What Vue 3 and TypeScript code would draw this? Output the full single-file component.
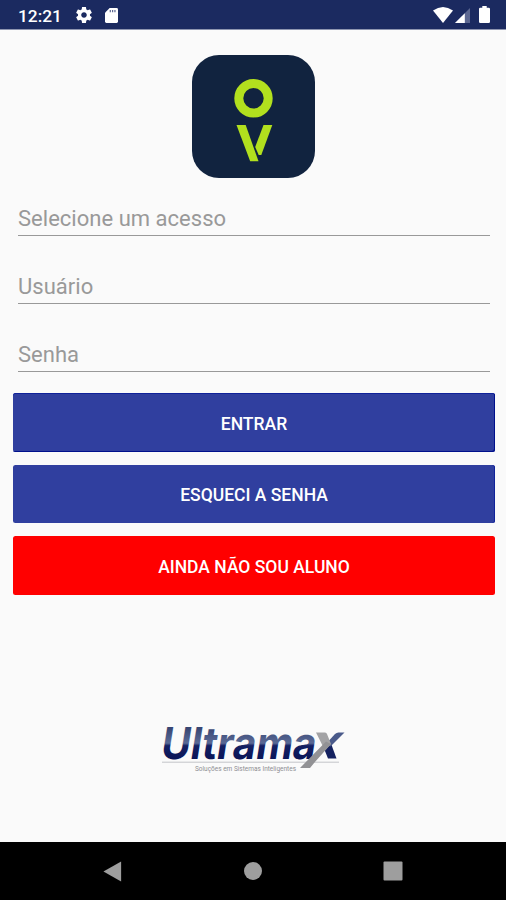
<script setup lang="ts">
import { reactive } from 'vue'

interface Field {
  key: 'access' | 'user' | 'password'
  label: string
  type: string
}

interface Action {
  label: string
  tone: 'first' | 'second' | 'danger'
}

const form = reactive({ access: '', user: '', password: '' })

const fields: Field[] = [
  { key: 'access', label: 'Selecione um acesso', type: 'text' },
  { key: 'user', label: 'Usuário', type: 'text' },
  { key: 'password', label: 'Senha', type: 'password' },
]

const actions: Action[] = [
  { label: 'ENTRAR', tone: 'first' },
  { label: 'ESQUECI A SENHA', tone: 'second' },
  { label: 'AINDA NÃO SOU ALUNO', tone: 'danger' },
]
</script>

<template>
  <div class="screen">
    <header class="status">
      <span class="clock">12:21</span>
      <svg class="gear" viewBox="2 2 20 20" aria-hidden="true">
        <path fill="#fff" d="M19.43 12.98c.04-.32.07-.64.07-.98s-.03-.66-.07-.98l2.11-1.65c.19-.15.24-.42.12-.64l-2-3.46c-.12-.22-.39-.3-.61-.22l-2.49 1c-.52-.4-1.08-.73-1.69-.98l-.38-2.65C14.46 2.18 14.25 2 14 2h-4c-.25 0-.46.18-.49.42l-.38 2.65c-.61.25-1.17.59-1.69.98l-2.49-1c-.23-.09-.49 0-.61.22l-2 3.46c-.13.22-.07.49.12.64l2.11 1.65c-.04.32-.07.65-.07.98s.03.66.07.98l-2.11 1.65c-.19.15-.24.42-.12.64l2 3.46c.12.22.39.3.61.22l2.49-1c.52.4 1.08.73 1.69.98l.38 2.65c.03.24.24.42.49.42h4c.25 0 .46-.18.49-.42l.38-2.65c.61-.25 1.17-.59 1.69-.98l2.49 1c.23.09.49 0 .61-.22l2-3.46c.12-.22.07-.49-.12-.64l-2.11-1.65zM12 15.5c-1.93 0-3.5-1.57-3.5-3.5s1.57-3.5 3.5-3.5 3.5 1.57 3.5 3.5-1.57 3.5-3.5 3.5z" />
      </svg>
      <svg class="card" viewBox="0 0 14 16" aria-hidden="true">
        <path fill="#fff" d="M5 0h7.500q1.500 0 1.500 1.500v13q0 1.500-1.500 1.500h-11q-1.500 0-1.500-1.500V5z" />
        <path stroke="#5c6791" stroke-width="1.300" d="M5.700 2v2.500M8.200 2v2.500M10.700 2v2.500" />
      </svg>
      <span class="grow"></span>
      <svg class="wifi" viewBox="0 0 20 16" aria-hidden="true">
        <path fill="#fff" d="M0 3.500Q10-3.500 20 3.500L10 16z" />
      </svg>
      <svg class="signal" viewBox="0 0 15 15" aria-hidden="true">
        <path fill="#5c6791" d="M15 0v15H0z" />
        <path fill="#fff" d="M9.800 5.200V15H0z" />
      </svg>
      <svg class="battery" viewBox="0 0 11 17" aria-hidden="true">
        <path fill="#fff" d="M3.300 0h4.400v1.800h2q1.300 0 1.300 1.300v12.600q0 1.300-1.300 1.300H1.300Q0 17 0 15.700V3.100q0-1.300 1.300-1.300h2z" />
      </svg>
    </header>

    <main class="content">
      <svg class="logo" viewBox="0 0 123 123" role="img" aria-label="OV">
        <rect width="123" height="123" rx="27" fill="#11233f" />
        <circle cx="61.500" cy="43.300" r="14.700" fill="none" stroke="#b2e01e" stroke-width="9" />
        <path fill="#b2e01e" d="M44.500 70h9.200l12.800 36.300h-8.300z" />
        <path fill="#b2e01e" d="M71.500 70h8.800L69.300 100h-2.600l-3.500-8z" />
      </svg>

      <form class="form" @submit.prevent>
        <div class="fields">
          <input
            v-for="field in fields"
            :key="field.key"
            v-model="form[field.key]"
            class="field"
            :type="field.type"
            :placeholder="field.label"
            :aria-label="field.label"
          />
        </div>
        <div class="actions">
          <button v-for="action in actions" :key="action.label" type="button" class="action" :class="action.tone">
            {{ action.label }}
          </button>
        </div>
      </form>

      <svg class="brand" viewBox="0 0 190 54" aria-label="Ultramax">
        <defs>
          <linearGradient id="ink" gradientUnits="userSpaceOnUse" x1="0" y1="-32" x2="0" y2="0">
            <stop offset="0" stop-color="#34426f" />
            <stop offset="0.520" stop-color="#5a6a96" />
            <stop offset="0.600" stop-color="#142062" />
            <stop offset="1" stop-color="#0b1659" />
          </linearGradient>
        </defs>
        <path stroke="#c3c4c9" stroke-width="1" d="M4 42.200h177" />
        <text class="wordmark" transform="translate(1.500 38.500) skewX(-9)" textLength="155" lengthAdjust="spacingAndGlyphs" fill="url(#ink)">Ultrama</text>
        <path fill="#14215f" d="M165 26l8-2.500 5.500 15h-8.500z" />
        <path fill="#4a5a8a" d="M167 25l10-11q1.500-1.500 3.500-1.500h6L172.500 26.500z" />
        <path fill="#a3a3a5" d="M158 12.500h9q1.500 0 2 1.500l4 10-6 6.500z" />
        <path fill="#929295" d="M168 21.500l5 2.500-16.500 18.500-4.500 5.500h-10z" />
        <text class="tagline" x="37" y="50.500" textLength="101" lengthAdjust="spacingAndGlyphs">Soluções em Sistemas Inteligentes</text>
      </svg>
    </main>

    <nav class="nav">
      <svg viewBox="0 0 20 22" class="back" aria-label="Voltar"><path fill="#9e9e9e" d="M0 11L18.500 .5v21z" /></svg>
      <svg viewBox="0 0 18 18" class="home" aria-label="Início"><circle cx="9" cy="9" r="9" fill="#9e9e9e" /></svg>
      <svg viewBox="0 0 20 20" class="recent" aria-label="Recentes"><rect x=".5" y=".5" width="19" height="19" rx="1" fill="#9e9e9e" /></svg>
    </nav>
  </div>
</template>

<style>
body {
  margin: 0;
}
</style>

<style scoped>
.screen {
  display: flex;
  flex-direction: column;
  width: 506px;
  height: 900px;
  overflow: hidden;
  background: #fafafa;
  font-family: Roboto, 'Liberation Sans', sans-serif;
}
.status {
  display: flex;
  align-items: flex-start;
  box-sizing: border-box;
  height: 30px;
  padding: 0 16px 0 18px;
  background: #1b2a60;
  border-bottom: 1px solid #8e95b0;
  color: #fff;
}
.clock {
  width: 58px;
  font-size: 17.3px;
  font-weight: 500;
  line-height: 20px;
  padding-top: 6px;
}
.gear {
  width: 16px;
  height: 16px;
  margin-top: 7px;
}
.card {
  width: 13px;
  height: 15px;
  margin: 8px 0 0 13px;
}
.grow {
  flex: 1;
}
.wifi {
  width: 20px;
  height: 16px;
  margin-top: 7px;
}
.signal {
  width: 15px;
  height: 15px;
  margin: 8px 0 0 2px;
}
.battery {
  width: 11px;
  height: 17px;
  margin: 6px 0 0 9px;
}
.content {
  flex: 1;
  display: flex;
  flex-direction: column;
  align-items: center;
}
.logo {
  width: 123px;
  height: 123px;
  margin: 25px 0 0 1px;
}
.form {
  width: 482px;
  margin: 22px 0 0 2px;
}
.fields {
  display: flex;
  flex-direction: column;
  gap: 32px;
  padding: 0 5px;
}
.field {
  box-sizing: border-box;
  width: 100%;
  height: 36px;
  padding: 1px 0 0;
  border: 0;
  border-bottom: 1px solid #999;
  border-radius: 0;
  outline: none;
  background: transparent;
  color: #333;
  font: 400 22px/34px Roboto, 'Liberation Sans', sans-serif;
  letter-spacing: 0.02px;
}
.field::placeholder {
  color: #999;
  opacity: 1;
}
.actions {
  display: flex;
  flex-direction: column;
  gap: 13px;
  margin-top: 21.3px;
}
.action {
  height: 58.600px;
  padding: 2px 0 0;
  border: 0;
  border-radius: 2.500px;
  background: #303f9f;
  color: #fff;
  font: 500 17.5px/20px Roboto, 'Liberation Sans', sans-serif;
}
.first {
  box-shadow: inset -1px -1px #00108c, inset 0 1px #10229a;
}
.second {
  box-shadow: inset -1px 0 #10229a;
}
.danger {
  background: #f00;
}
.brand {
  width: 190px;
  height: 54px;
  margin: 124.7px 0 0;
  overflow: visible;
}
.wordmark {
  font-family: Inter, 'Open Sans', sans-serif;
  font-size: 44px;
  font-weight: 700;
}
.tagline {
  font-size: 6.500px;
  fill: #8e8e92;
}
.nav {
  display: flex;
  align-items: flex-start;
  box-sizing: border-box;
  height: 58px;
  padding: 19px 0 0 103px;
  background: #000;
}
.back {
  width: 20px;
  height: 21px;
}
.home {
  width: 18px;
  height: 18px;
  margin: 1px 0 0 121px;
}
.recent {
  width: 20px;
  height: 20px;
  margin: 0 0 0 121px;
}
</style>
